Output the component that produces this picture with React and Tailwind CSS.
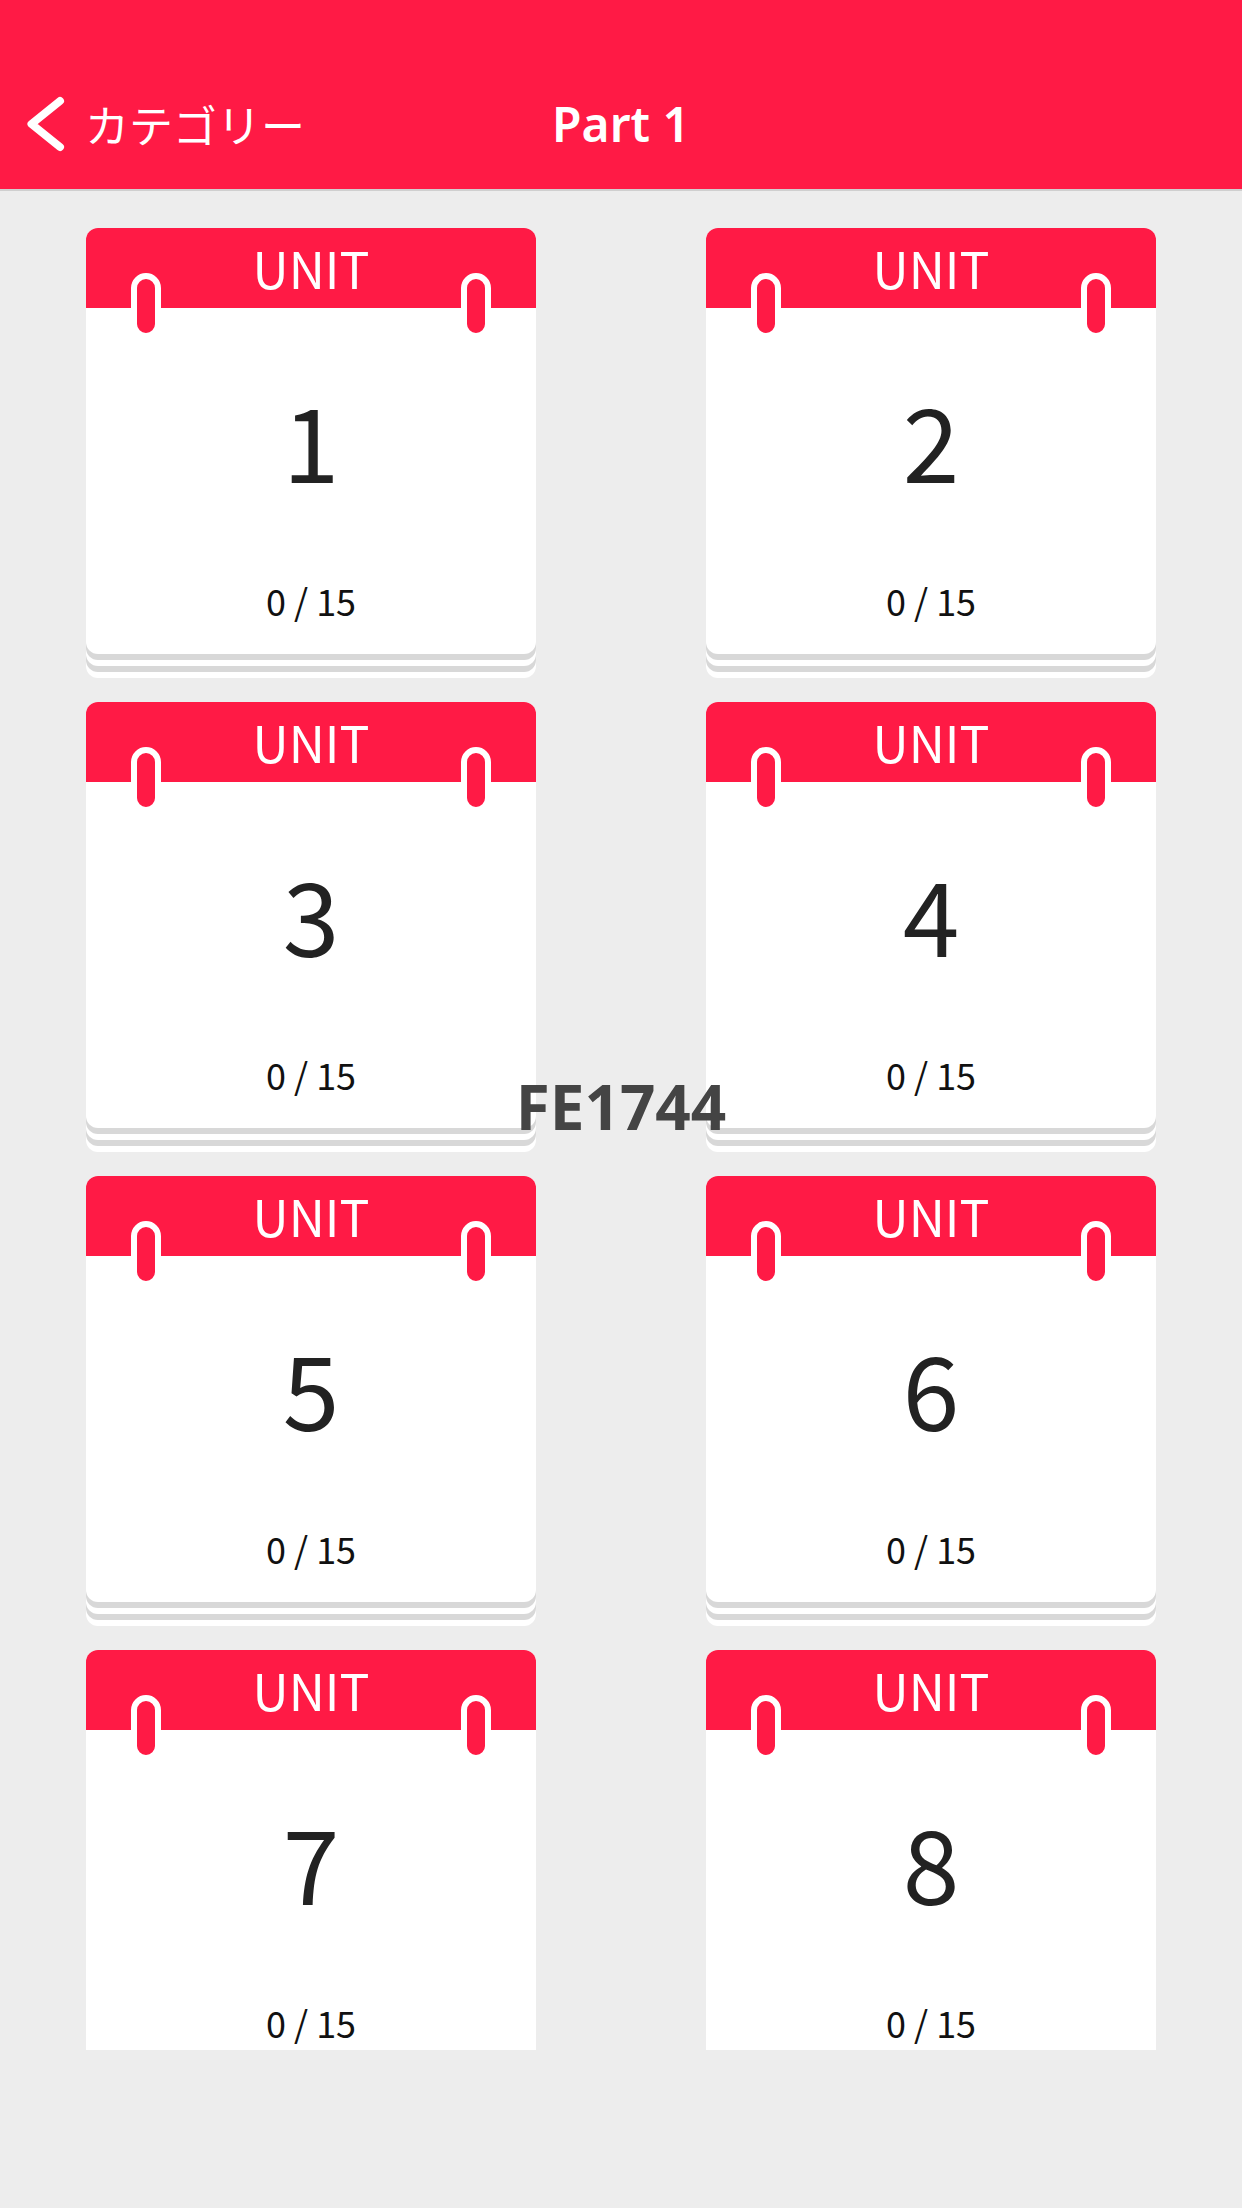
import React from 'react';

const units = [1, 2, 3, 4, 5, 6, 7, 8].map((n) => ({ id: n, done: 0, total: 15 }));

const Ring = ({ side }) => (
  <div
    className={`absolute top-[45px] ${side === 'left' ? 'left-[45px]' : 'right-[45px]'} w-[30px] h-[66px] rounded-full border-[6px] border-white bg-[#ff1a45]`}
  />
);

const UnitCard = ({ unit }) => (
  <div className="relative h-[426px] rounded-[12px] bg-white overflow-hidden shadow-[0_6px_0_#d8d8d8,0_12px_0_#ffffff,0_18px_0_#d8d8d8,0_24px_0_#ffffff]">
    <div className="h-[80px] bg-[#ff1a45] pt-[14px] text-center text-white text-[50px] leading-[50px]">
      UNIT
    </div>
    <Ring side="left" />
    <Ring side="right" />
    <div className="pt-[80px] text-center text-[102px] leading-none text-[#222222]">
      {unit.id}
    </div>
    <div className="mt-[92px] text-center text-[36px] leading-none text-[#111111]">
      {unit.done} / {unit.total}
    </div>
  </div>
);

export default function App() {
  return (
    <div className="relative w-[1242px] h-[2208px] overflow-hidden bg-[#ededed] font-['Noto_Sans_CJK_JP',sans-serif]">
      {/* header */}
      <div className="h-[191px] bg-[#ff1a45] border-b-2 border-[#cfcfcf] pt-[58px]">
        <div className="grid grid-cols-[1fr_auto_1fr] items-center h-[132px]">
          <div className="flex items-center">
            <svg width="44" height="64" viewBox="0 0 44 64" className="ml-[25px]">
              <polyline
                points="35,9 6.5,32 35,55"
                fill="none"
                stroke="#ffffff"
                strokeWidth="8"
                strokeLinecap="round"
                strokeLinejoin="round"
              />
            </svg>
            <span className="ml-[16px] text-white text-[44px] leading-none">カテゴリー</span>
          </div>
          <div className="text-white text-[48px] font-semibold leading-none font-['Noto_Sans',sans-serif]">
            Part 1
          </div>
          <div />
        </div>
      </div>

      {/* unit list */}
      <div className="h-[1859px] overflow-hidden">
        <div className="grid grid-cols-2 gap-x-[170px] gap-y-[48px] px-[86px] pt-[37px]">
          {units.map((unit) => (
            <UnitCard key={unit.id} unit={unit} />
          ))}
        </div>
      </div>

      {/* watermark */}
      <div className="absolute left-0 right-0 top-[1075px] text-center text-[62px] font-bold leading-none text-[#444444] font-['Noto_Sans',sans-serif]">
        FE1744
      </div>
    </div>
  );
}
